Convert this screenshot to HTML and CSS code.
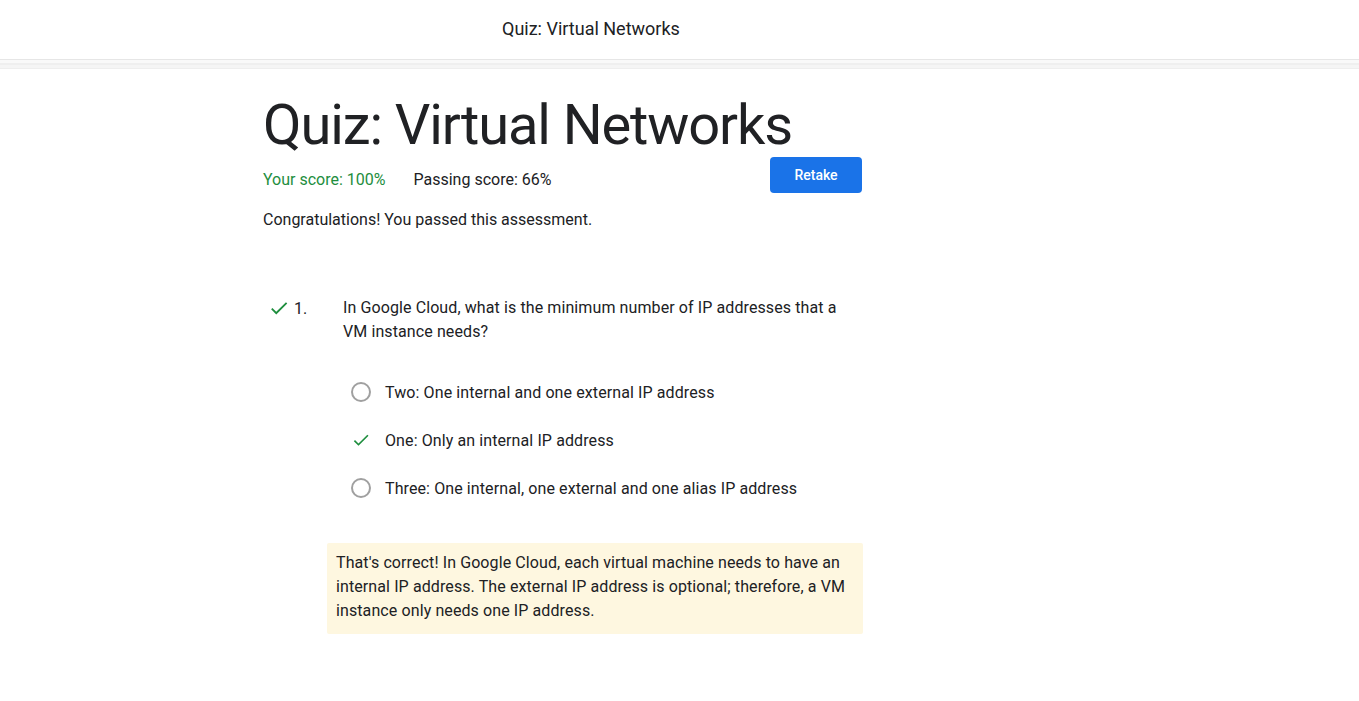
FILE: index.html
```html
<!DOCTYPE html>
<html>
<head>
<meta charset="utf-8">
<link rel="stylesheet" href="styles.css">
</head>
<body>
<header class="topbar">
  <div class="topbar-title">Quiz: Virtual Networks</div>
</header>
<div class="band"></div>
<main class="content">
  <h1 class="title">Quiz: Virtual Networks</h1>
  <div class="score-row">
    <div class="scores">
      <span class="your-score">Your score: 100%</span>
      <span class="pass-score">Passing score: 66%</span>
    </div>
    <button class="retake">Retake</button>
  </div>
  <p class="congrats">Congratulations! You passed this assessment.</p>

  <section class="question">
    <div class="q-head">
      <div class="q-mark">
        <svg class="check" width="22" height="22" viewBox="0 0 24 24"><path d="M9 16.2L4.8 12l-1.4 1.4L9 19 21 7l-1.4-1.4L9 16.2z" fill="#1e8e3e"/></svg>
        <span class="q-num">1.</span>
      </div>
      <div class="q-text">In Google Cloud, what is the minimum number of IP addresses that a VM instance needs?</div>
    </div>
    <ul class="options">
      <li class="option"><span class="radio"></span><span>Two: One internal and one external IP address</span></li>
      <li class="option"><svg class="opt-check" width="20" height="20" viewBox="0 0 24 24"><path d="M9 16.2L4.8 12l-1.4 1.4L9 19 21 7l-1.4-1.4L9 16.2z" fill="#1e8e3e"/></svg><span>One: Only an internal IP address</span></li>
      <li class="option"><span class="radio"></span><span>Three: One internal, one external and one alias IP address</span></li>
    </ul>
    <div class="feedback">That's correct! In Google Cloud, each virtual machine needs to have an internal IP address. The external IP address is optional; therefore, a VM instance only needs one IP address.</div>
  </section>
</main>
</body>
</html>
```

FILE: styles.css
```css
html, body {
  margin: 0;
  padding: 0;
  background: #fff;
}
body {
  font-family: Roboto, "Liberation Sans", Arial, sans-serif;
  color: #202124;
}
.topbar {
  height: 59px;
  display: flex;
  align-items: center;
  padding-left: 502px;
  border-bottom: 1px solid #e6e6e6;
}
.topbar-title {
  font-size: 18px;
  color: #202124;
  margin-top: -2px;
}
.band {
  height: 8px;
  background: linear-gradient(#f9f9f9 0, #f9f9f9 3px, #efefef 3px, #efefef 5px, #f5f5f5 5px);
  border-bottom: 1px solid #eeeeee;
}
.content {
  margin-left: 263px;
  width: 600px;
}
.title {
  margin: 24px 0 0 0;
  font-size: 56px;
  font-weight: 400;
  line-height: 64px;
  letter-spacing: -1.1px;
  color: #202124;
}
.score-row {
  display: flex;
  justify-content: space-between;
  align-items: flex-start;
  margin-top: -2px;
}
.scores {
  display: flex;
  gap: 28px;
  font-size: 16px;
  padding-top: 15px;
}
.your-score { color: #1e8e3e; }
.pass-score { color: #202124; }
.retake {
  width: 92px;
  height: 36px;
  margin-top: 2px;
  border: none;
  border-radius: 4px;
  background: #1a73e8;
  color: #fff;
  font-family: Roboto, "Liberation Sans", Arial, sans-serif;
  font-size: 14px;
  font-weight: 500;
  margin-right: 1px;
}
.congrats {
  margin: 15px 0 0 0;
  font-size: 16px;
  line-height: 24px;
}
.question {
  margin-top: 64px;
  letter-spacing: 0.1px;
}
.q-head {
  display: flex;
  align-items: flex-start;
}
.q-mark {
  width: 80px;
  display: flex;
  align-items: center;
  gap: 4px;
  padding-left: 5px;
  box-sizing: border-box;
  height: 24px;
}
.check { display: block; }
.q-num { font-size: 16px; }
.q-text {
  width: 510px;
  font-size: 16px;
  line-height: 24px;
}
.options {
  list-style: none;
  margin: 36px 0 0 88px;
  padding: 0;
  display: flex;
  flex-direction: column;
  gap: 24px;
}
.option {
  display: flex;
  align-items: center;
  gap: 14px;
  height: 24px;
  font-size: 16px;
}
.radio {
  width: 16px;
  height: 16px;
  border: 2px solid #a0a0a0;
  border-radius: 50%;
  flex: none;
}
.opt-check { display: block; flex: none; }
.feedback {
  margin: 43px 0 0 64px;
  width: 536px;
  box-sizing: border-box;
  background: #fef7e0;
  padding: 8px 9px 11px 9px;
  font-size: 16px;
  line-height: 24px;
  border-radius: 2px;
}
```
